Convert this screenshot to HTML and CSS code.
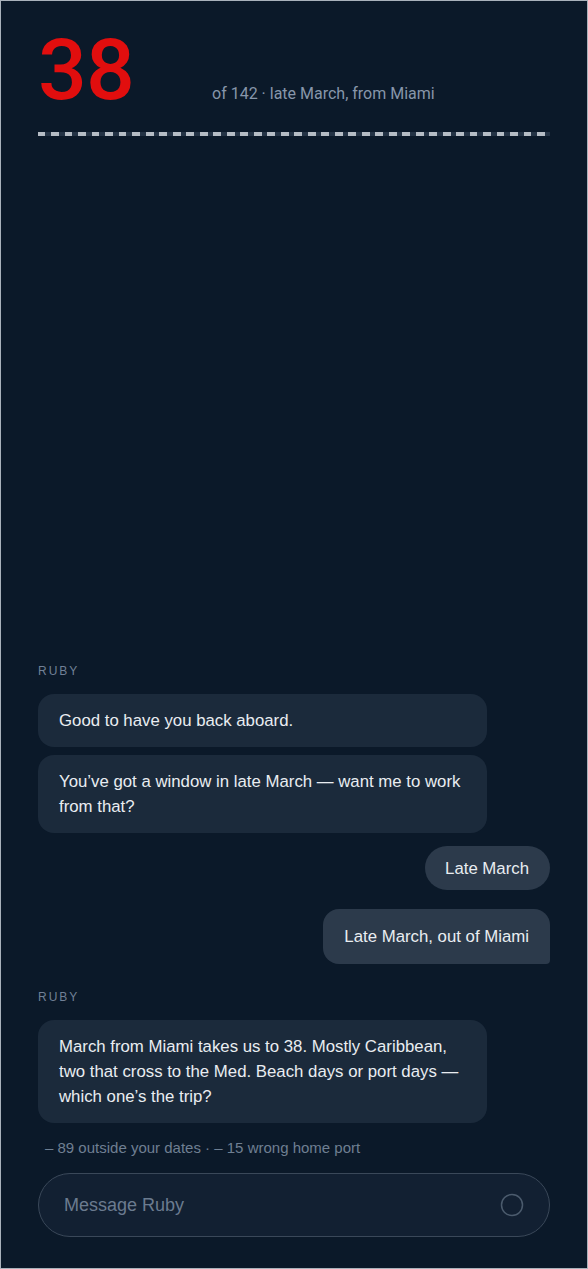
FILE: index.html
```html
<!DOCTYPE html>
<html lang="en">
<head>
    <meta charset="UTF-8">
    <meta name="viewport" content="width=device-width, initial-scale=1.0">
    <title>Ruby</title>
    <link rel="stylesheet" href="styles.css">
</head>
<body>
    <div class="screen">
        <header class="tally">
            <div class="tally-row">
                <span class="tally-count">38</span>
                <span class="tally-meta">of 142 · late March, from Miami</span>
            </div>
            <div class="tally-bar"></div>
        </header>

        <div class="spacer"></div>

        <main class="chat">
            <div class="speaker">RUBY</div>
            <div class="bubble bot">Good to have you back aboard.</div>
            <div class="bubble bot">You’ve got a window in late March — want me to work from that?</div>
            <div class="bubble chip">Late March</div>
            <div class="bubble user">Late March, out of Miami</div>

            <div class="speaker later">RUBY</div>
            <div class="bubble bot">March from Miami takes us to 38. Mostly Caribbean, two that cross to the Med. Beach days or port days — which one’s the trip?</div>
            <div class="filters">– 89 outside your dates · – 15 wrong home port</div>

            <div class="composer">
                <span class="composer-placeholder">Message Ruby</span>
                <svg class="composer-send" width="24" height="24" viewBox="0 0 24 24">
                    <circle cx="12" cy="12" r="10.5" fill="none" stroke="#4b5b6d" stroke-width="1.5"/>
                </svg>
            </div>
        </main>
    </div>
</body>
</html>
```

FILE: styles.css
```css
* {
    box-sizing: border-box;
}
html, body {
    margin: 0;
    height: 100%;
}
body {
    background: #0b1929;
    color: #e9edf1;
    font-family: 'Liberation Sans', Arial, sans-serif;
}
.screen {
    height: 100vh;
    border: 1px solid #aab2bb;
    display: flex;
    flex-direction: column;
    padding: 0 37px 31px;
}
.tally {
    padding-top: 26px;
}
.tally-row {
    display: flex;
    align-items: baseline;
}
.tally-count {
    font-family: Roboto, sans-serif;
    font-weight: 500;
    font-size: 86px;
    line-height: 1;
    color: #e10e0e;
    width: 174px;
    letter-spacing: -1px;
}
.tally-meta {
    font-family: Roboto, sans-serif;
    font-size: 16px;
    color: #8796aa;
}
.tally-bar {
    margin-top: 19px;
    height: 4px;
    width: 512px;
    background: repeating-linear-gradient(to right, #b5bcc4 0, #b5bcc4 7.5px, #243345 7.5px, #243345 13.5px);
}
.spacer {
    flex: 1;
}
.chat {
    display: flex;
    flex-direction: column;
}
.speaker {
    font-size: 12px;
    letter-spacing: 2px;
    color: #718096;
    margin-bottom: 16px;
}
.speaker.later {
    margin-top: 18px;
}
.bubble {
    font-size: 16.8px;
    line-height: 25px;
    padding: 14px 21px;
    border-radius: 16px;
    max-width: 449px;
    margin-bottom: 8px;
}
.bot {
    background: #1b2a3b;
    align-self: flex-start;
    width: 449px;
}
.chip {
    align-self: flex-end;
    background: #2c3a4b;
    border-radius: 22px;
    padding: 10px 21px 9px 20px;
    margin-top: 5px;
    margin-bottom: 19px;
}
.user {
    align-self: flex-end;
    background: #2c3a4b;
    border-radius: 16px 16px 4px 16px;
    padding: 15px 21px;
}
.filters {
    font-size: 15px;
    color: #6f7f92;
    padding-left: 7px;
    margin-top: 8px;
    margin-bottom: 17px;
}
.composer {
    height: 64px;
    border: 1px solid #3a4859;
    border-radius: 32px;
    background: #122032;
    display: flex;
    align-items: center;
    justify-content: space-between;
    padding: 0 25px 0 25px;
}
.composer-placeholder {
    font-size: 18px;
    color: #6b7b8f;
}
.composer-send {
    display: block;
}
```
